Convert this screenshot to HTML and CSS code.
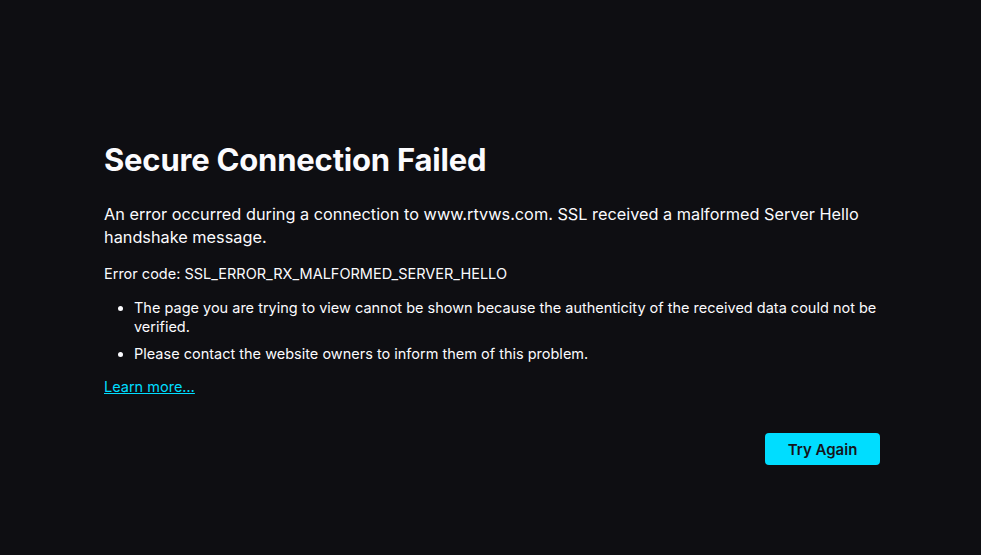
FILE: index.html
```html
<!DOCTYPE html>
<html lang="en">
<head>
<meta charset="utf-8">
<title>Secure Connection Failed</title>
<link rel="stylesheet" href="styles.css">
</head>
<body>
<main class="container">
  <h1 class="title">Secure Connection Failed</h1>
  <p class="desc">An error occurred during a connection to www.rtvws.com. SSL received a malformed Server Hello handshake message.</p>
  <p class="code">Error code: SSL_ERROR_RX_MALFORMED_SERVER_HELLO</p>
  <ul class="list">
    <li>The page you are trying to view cannot be shown because the authenticity of the received data could not be verified.</li>
    <li>Please contact the website owners to inform them of this problem.</li>
  </ul>
  <a class="learn" href="#">Learn more…</a>
  <div class="actions">
    <button class="btn">Try Again</button>
  </div>
</main>
</body>
</html>
```

FILE: styles.css
```css
html, body {
  margin: 0;
  height: 100%;
}
body {
  background: #0e0e12;
  color: #fbfbfe;
  font-family: Inter, "Noto Sans", sans-serif;
}
.container {
  width: 776px;
  margin-left: 104px;
  padding-top: 141px;
}
.title {
  margin: 0;
  font-size: 31px;
  font-weight: 700;
  line-height: 38px;
  letter-spacing: -0.2px;
}
.desc {
  margin: 24px 0 0;
  font-size: 16.3px;
  line-height: 23px;
}
.code {
  margin: 15px 0 0;
  font-size: 14.5px;
  line-height: 20px;
}
.list {
  margin: 14px 0 0;
  padding-left: 30px;
  font-size: 14.5px;
  line-height: 19px;
}
.list li { margin-bottom: 8px; }
.learn {
  display: inline-block;
  margin-top: 6px;
  color: #00ddff;
  font-size: 14.5px;
  line-height: 20px;
}
.actions {
  display: flex;
  justify-content: flex-end;
  margin-top: 36px;
}
.btn {
  width: 115px;
  height: 32px;
  border: 0;
  border-radius: 4px;
  background: #00ddff;
  color: #15141a;
  font-family: inherit;
  font-size: 15px;
  font-weight: 600;
}
```
